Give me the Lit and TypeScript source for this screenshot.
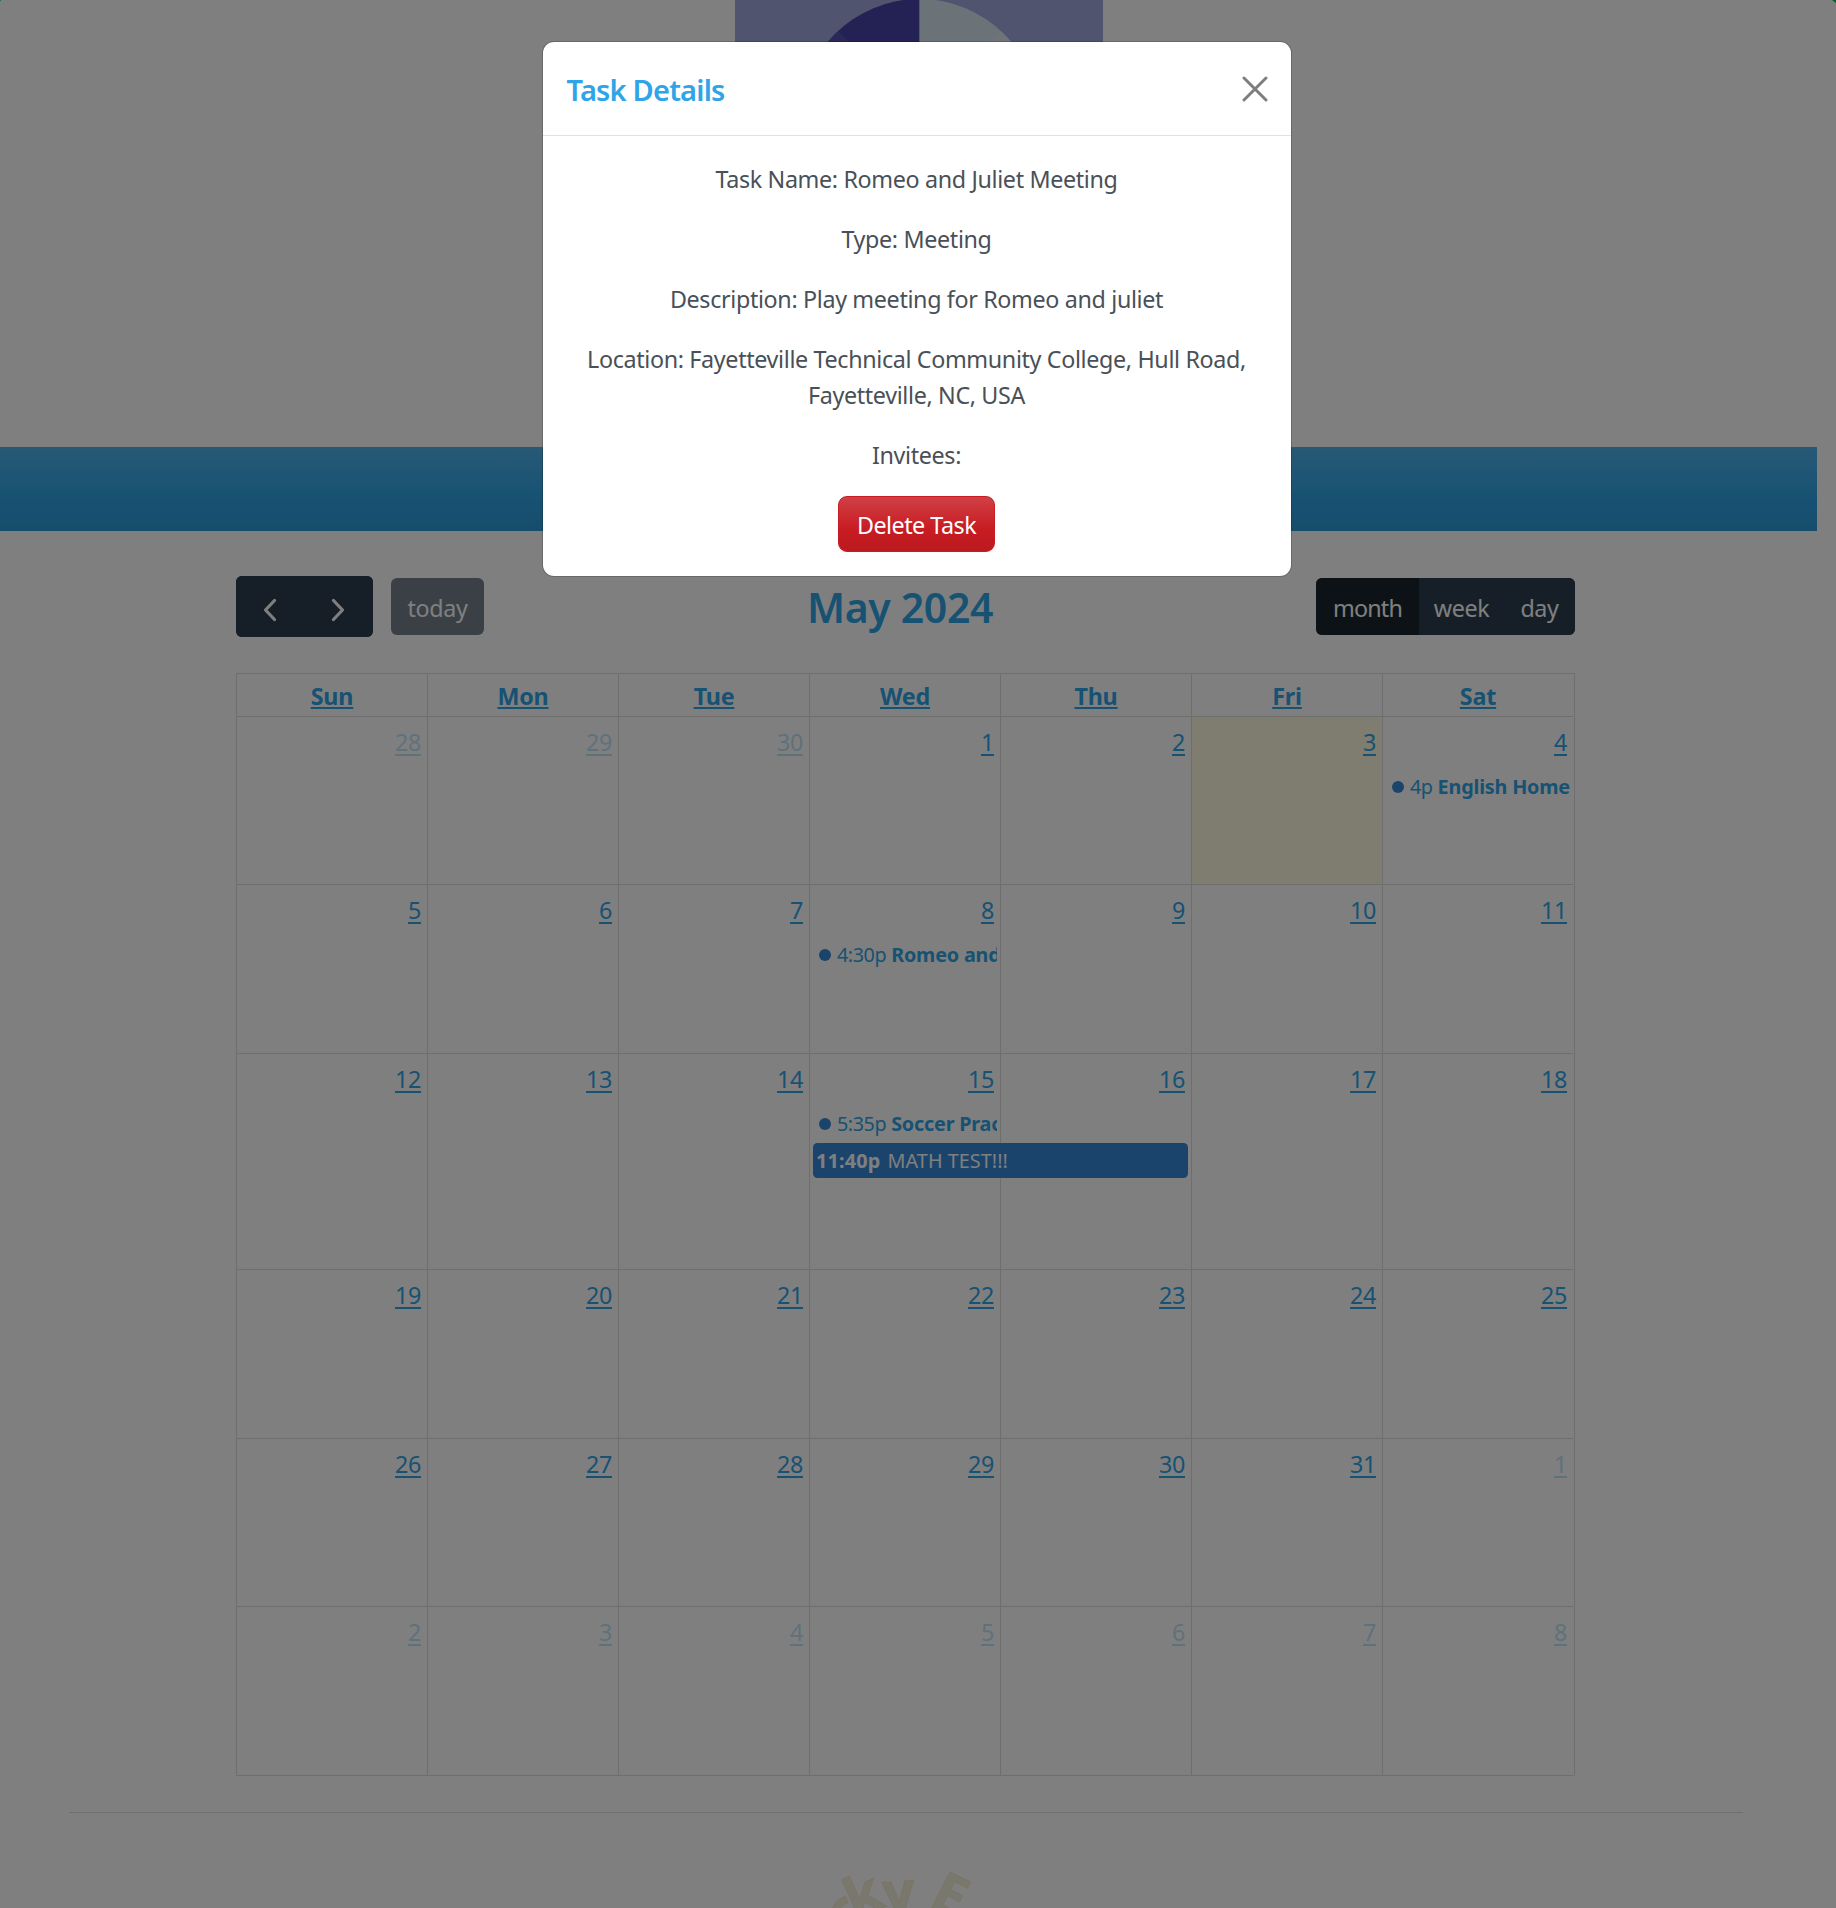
import { LitElement, html, css, svg, nothing } from "lit";
import { customElement } from "lit/decorators.js";
import { classMap } from "lit/directives/class-map.js";

interface CalEvent {
  time: string;
  title: string;
  block?: boolean;
}

interface Day {
  label: number;
  other: boolean;
  today: boolean;
  last: boolean;
  events: CalEvent[];
}

const WEEKDAYS = ["Sun", "Mon", "Tue", "Wed", "Thu", "Fri", "Sat"];

const EVENTS: Record<number, CalEvent[]> = {
  4: [{ time: "4p", title: "English Homework" }],
  8: [{ time: "4:30p", title: "Romeo and Juliet Meeting" }],
  15: [
    { time: "5:35p", title: "Soccer Practice" },
    { time: "11:40p", title: "MATH TEST!!!", block: true },
  ],
};

/** Six weeks that cover May 2024, starting on Sunday 28 April. */
function buildDays(): Day[] {
  return Array.from({ length: 42 }, (_, i) => {
    const date = new Date(2024, 3, 28 + i);
    const inMonth = date.getMonth() === 4;
    const label = date.getDate();
    return {
      label,
      other: !inMonth,
      today: inMonth && label === 3,
      last: i % 7 === 6,
      events: inMonth ? EVENTS[label] ?? [] : [],
    };
  });
}

@customElement("month-calendar")
export class MonthCalendar extends LitElement {
  static styles = css`
    :host {
      display: block;
      width: 1339px;
      color: #2fa4e7;
    }
    .toolbar {
      display: flex;
      justify-content: space-between;
      align-items: center;
      height: 61px;
      margin-bottom: 36px;
    }
    .side {
      display: flex;
      align-items: center;
      gap: 18px;
    }
    .group {
      display: flex;
      border-radius: 6px;
      overflow: hidden;
      background: #2c3e50;
    }
    .btn {
      box-sizing: border-box;
      height: 57px;
      padding: 2px 0 0;
      border: 0;
      background: #2c3e50;
      color: #fff;
      font: inherit;
      letter-spacing: -0.35px;
      display: flex;
      align-items: center;
      justify-content: center;
    }
    .nav {
      width: 68.5px;
      height: 61px;
      padding: 7px 0 0;
    }
    .today-btn {
      width: 93px;
      border-radius: 6px;
      opacity: 0.65;
    }
    .month {
      width: 103px;
      background: #1a252f;
      letter-spacing: -0.8px;
    }
    .week {
      width: 85px;
    }
    .day-btn {
      width: 71px;
    }
    .title {
      margin: 0;
      font-size: 41px;
      font-weight: 600;
      line-height: 50px;
      letter-spacing: -0.35px;
    }
    .grid {
      display: grid;
      grid-template-columns: repeat(6, 191px) 192px;
      grid-template-rows: 43px 168px 169px 216px 169px 168px 169px;
      border-top: 1px solid #ddd;
      border-right: 1px solid #ddd;
    }
    .head,
    .cell {
      box-sizing: border-box;
      border-left: 1px solid #ddd;
      border-bottom: 1px solid #ddd;
      min-width: 0;
    }
    .head {
      display: flex;
      justify-content: center;
      padding-top: 4px;
      font-weight: 700;
      line-height: 36px;
      letter-spacing: -0.2px;
      text-decoration: underline;
      text-decoration-thickness: 2px;
      text-underline-offset: 2px;
    }
    .cell {
      display: flex;
      flex-direction: column;
      padding-top: 7px;
    }
    .head.last,
    .cell.last {
      margin-right: 1px;
    }
    .cell.today {
      background: rgba(255, 220, 40, 0.15);
    }
    .num {
      align-self: flex-end;
      margin-right: 6px;
      line-height: 36px;
      height: 47px;
      letter-spacing: -0.35px;
      text-decoration: underline;
      text-decoration-thickness: 2px;
      text-underline-offset: 3px;
    }
    .other .num {
      opacity: 0.3;
    }
    .dot-event,
    .block-event {
      display: flex;
      align-items: center;
      font-size: 19.8px;
      line-height: 31px;
      white-space: nowrap;
    }
    .dot-event {
      height: 31px;
      margin: 0 3px 4px;
      padding-left: 6px;
      overflow: hidden;
    }
    .dot {
      flex: none;
      width: 12px;
      height: 12px;
      margin: 1px 6px 0 0;
      border-radius: 50%;
      background: #3788d8;
    }
    .time {
      margin-right: 5px;
      letter-spacing: -0.45px;
    }
    .name {
      font-weight: 700;
      letter-spacing: -0.2px;
    }
    .block-event {
      box-sizing: border-box;
      position: relative;
      z-index: 1;
      width: 375px;
      height: 35px;
      margin-left: 3px;
      padding-left: 3px;
      border-radius: 4.5px;
      background: #3788d8;
      color: #fff;
    }
    .block-event .time {
      font-weight: 700;
      margin-right: 7px;
      letter-spacing: 0.2px;
    }
    .block-event .name {
      font-weight: 400;
      letter-spacing: 0.05px;
    }
  `;

  private days = buildDays();

  private chevron(d: string) {
    return html`<svg width="18" height="26" viewBox="0 0 18 26" fill="none">
      <path d=${d} stroke="#fff" stroke-width="3.2" stroke-linecap="round" stroke-linejoin="round" />
    </svg>`;
  }

  private event(e: CalEvent) {
    return e.block
      ? html`<div class="block-event"><span class="time">${e.time}</span><span class="name">${e.title}</span></div>`
      : html`<div class="dot-event">
          <span class="dot"></span><span class="time">${e.time}</span><span class="name">${e.title}</span>
        </div>`;
  }

  render() {
    return html`
      <div class="toolbar">
        <div class="side">
          <div class="group">
            <button class="btn nav" aria-label="previous">${this.chevron("M13.5 3.5 L4.5 13 L13.5 22.5")}</button>
            <button class="btn nav" aria-label="next">${this.chevron("M3.5 3.5 L12.5 13 L3.5 22.5")}</button>
          </div>
          <button class="btn today-btn">today</button>
        </div>
        <h2 class="title">May 2024</h2>
        <div class="group">
          <button class="btn month">month</button>
          <button class="btn week">week</button>
          <button class="btn day-btn">day</button>
        </div>
      </div>
      <div class="grid">
        ${WEEKDAYS.map((d) => html`<div class=${classMap({ head: true, last: d === "Sat" })}><span>${d}</span></div>`)}
        ${this.days.map(
          (d) => html`<div class=${classMap({ cell: true, other: d.other, today: d.today, last: d.last })}>
            <span class="num">${d.label}</span>
            ${d.events.length ? d.events.map((e) => this.event(e)) : nothing}
          </div>`
        )}
      </div>
    `;
  }
}

@customElement("task-modal")
export class TaskModal extends LitElement {
  static styles = css`
    :host {
      display: block;
      box-sizing: border-box;
      width: 750px;
      border: 1px solid rgba(0, 0, 0, 0.175);
      border-radius: 12px;
      background: #fff;
      background-clip: padding-box;
      color: #495057;
    }
    .header {
      display: flex;
      align-items: center;
      justify-content: space-between;
      box-sizing: border-box;
      height: 94px;
      padding: 0 24px 0 23.5px;
      border-bottom: 1px solid #dee2e6;
    }
    .title {
      margin: 1px 0 0;
      color: #2fa4e7;
      font-size: 29px;
      font-weight: 600;
      line-height: 45px;
      letter-spacing: -0.8px;
    }
    .close {
      display: flex;
      padding: 0;
      margin: 0 -1px 0 0;
      border: 0;
      background: none;
      opacity: 0.5;
    }
    .body {
      display: flex;
      flex-direction: column;
      align-items: center;
      padding: 25px 25px 24px 24px;
      text-align: center;
    }
    .line {
      margin: 0 0 24px;
      line-height: 36px;
      letter-spacing: -0.35px;
    }
    .delete {
      box-sizing: border-box;
      width: 157px;
      height: 56px;
      margin-top: -1px;
      padding: 2px 0 0;
      border: 1px solid #c71c22;
      border-radius: 9px;
      background: linear-gradient(180deg, #d04045, #c71c22 60%, #bb1a20);
      color: #fff;
      font: inherit;
      letter-spacing: -0.5px;
    }
  `;

  private lines = [
    "Task Name: Romeo and Juliet Meeting",
    "Type: Meeting",
    "Description: Play meeting for Romeo and juliet",
    "Location: Fayetteville Technical Community College, Hull Road, Fayetteville, NC, USA",
    "Invitees:",
  ];

  render() {
    return html`
      <div class="header">
        <h5 class="title">Task Details</h5>
        <button class="close" aria-label="Close">
          <svg width="26" height="26" viewBox="0 0 26 26" fill="none">
            <path d="M2 2 L24 24 M24 2 L2 24" stroke="#000" stroke-width="3" stroke-linecap="round" />
          </svg>
        </button>
      </div>
      <div class="body">
        ${this.lines.map((l) => html`<p class="line">${l}</p>`)}
        <button class="delete">Delete Task</button>
      </div>
    `;
  }
}

@customElement("app-root")
export class AppRoot extends LitElement {
  static styles = css`
    :host {
      display: block;
      font-family: "Noto Sans", "Open Sans", sans-serif;
      font-size: 23.3px;
    }
    .page {
      position: relative;
      height: 1908px;
      overflow: hidden;
      background: #fff;
    }
    .banner {
      display: flex;
      height: 447px;
      padding-left: 734.5px;
    }
    .bar {
      width: 1817px;
      height: 84px;
      margin-bottom: 45px;
      background: linear-gradient(180deg, #50b3eb, #2fa4e7 60%, #2c9ad9);
    }
    .content {
      display: flex;
      flex-direction: column;
      align-items: center;
      width: 1811px;
    }
    .rule {
      width: 1674px;
      height: 1px;
      margin: 36px 0 47px;
      background: #dfdfdf;
    }
    .seal {
      font-family: "Open Sans", sans-serif;
      font-weight: 700;
      font-size: 56px;
    }
    .backdrop {
      position: absolute;
      inset: 0;
      z-index: 5;
      background: rgba(0, 0, 0, 0.5);
    }
    .corner {
      position: absolute;
      z-index: 6;
      top: 0;
      right: 0;
      width: 4px;
      height: 3px;
      background: #00602e;
      clip-path: polygon(0 0, 100% 0, 100% 100%);
    }
    .corner.left {
      left: 0;
      width: 1px;
      height: 1px;
      background: #1d6b5c;
      clip-path: none;
    }
    task-modal {
      position: absolute;
      z-index: 7;
      left: 542px;
      top: 41px;
    }
  `;

  private logo() {
    return html`<svg width="368.5" height="368" viewBox="734.5 0 368.5 368">
      <rect x="734.5" y="0" width="368.5" height="368" fill="#a0a8dc" />
      <path d="M919 -1 A120 120 0 0 0 919 239 Z" fill="#4844a8" />
      <path d="M919 -1 A120 120 0 0 1 919 239 Z" fill="#d6e6f2" />
      <path d="M838 31 L919 119 L799 119 A120 120 0 0 1 838 31" fill="#5652ae" />
      <path d="M1000 31 L919 119 L1039 119 A120 120 0 0 0 1000 31" fill="#dde9f1" />
    </svg>`;
  }

  private seal() {
    const letters: [string, number, number, number][] = [
      ["c", 845, 1936, -44],
      ["k", 854, 1920, -24],
      ["y", 883, 1913, -4],
      ["E", 926.5, 1905, 27],
    ];
    return html`<svg class="seal" width="200" height="48" viewBox="805 1860 200 48">
      ${letters.map(
        ([ch, x, y, a]) => svg`<text transform="translate(${x} ${y}) rotate(${a})"
          fill="#f3f1dc" stroke="#f6e6c0" stroke-width="0.8">${ch}</text>`
      )}
    </svg>`;
  }

  render() {
    return html`
      <div class="page">
        <div class="banner">${this.logo()}</div>
        <div class="bar"></div>
        <div class="content">
          <month-calendar></month-calendar>
          <div class="rule"></div>
          ${this.seal()}
        </div>
        <div class="backdrop"></div>
        <div class="corner"></div>
        <div class="corner left"></div>
        <task-modal></task-modal>
      </div>
    `;
  }
}
